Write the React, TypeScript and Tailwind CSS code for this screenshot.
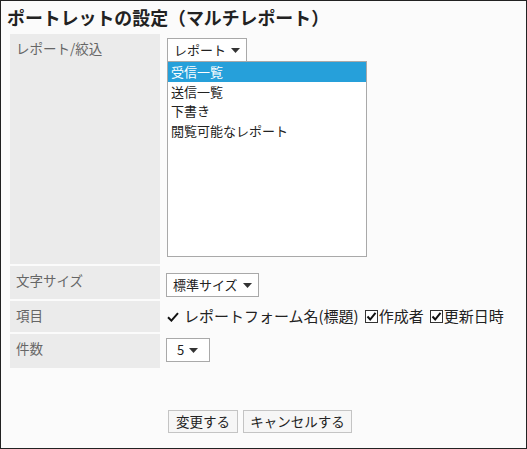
import React from 'react';

const Caret = () => (
    <svg width="9" height="5" viewBox="0 0 9 5" className="ml-[5px] shrink-0">
        <path d="M0 0 H9 L4.5 5 Z" fill="#333" />
    </svg>
);

const CheckBox = () => (
    <span className="inline-flex items-center justify-center w-[13px] h-[13px] border border-[#333] bg-white mr-[1px]">
        <svg width="11" height="11" viewBox="0 0 11 11">
            <path d="M1.5 5.5 L4.2 8.5 L9.5 1.8" fill="none" stroke="#111" strokeWidth="2" />
        </svg>
    </span>
);

const FakeSelect = ({ label, width }: { label: string; width: string }) => (
    <div className={`${width} h-[24px] flex items-center px-[6px] border border-[#a9a9a9] bg-white text-[13px] text-[#222]`}>
        <span>{label}</span>
        <Caret />
    </div>
);

const Label = ({ children }: { children: React.ReactNode }) => (
    <div className="w-[150px] shrink-0 bg-[#ebebeb] pl-[6px] pt-[4px] text-[13.5px] leading-[20px] text-[#666]">
        {children}
    </div>
);

const items = ['受信一覧', '送信一覧', '下書き', '閲覧可能なレポート'];

const App = () => {
    return (
        <div className="w-[527px] h-[449px] border border-[#222] bg-[#fbfbfb] font-['Noto_Sans_CJK_JP',sans-serif] flex flex-col">
            <h1 className="pl-[6px] pt-[5px] h-[33px] text-[17.9px] leading-[22px] font-bold text-[#222]">
                ポートレットの設定（マルチレポート）
            </h1>

            <div className="ml-[9px] flex flex-col gap-[2px]">
                {/* レポート/絞込 */}
                <div className="flex h-[230px]">
                    <Label>レポート/絞込</Label>
                    <div className="pl-[7px] pt-[4px]">
                        <FakeSelect label="レポート" width="w-[80px]" />
                        <div className="w-[200px] h-[196px] -mt-[1px] border border-[#a9a9a9] bg-white text-[13px] leading-[19.5px] text-[#222]">
                            {items.map((it, i) => (
                                <div
                                    key={it}
                                    className={`pl-[3px] ${i === 0 ? 'bg-[#26a0da] text-white' : ''}`}
                                >
                                    {it}
                                </div>
                            ))}
                        </div>
                    </div>
                </div>

                {/* 文字サイズ */}
                <div className="flex h-[33px]">
                    <Label>文字サイズ</Label>
                    <div className="pl-[6px] pt-[7px]">
                        <FakeSelect label="標準サイズ" width="w-[93px]" />
                    </div>
                </div>

                {/* 項目 */}
                <div className="flex h-[31px]">
                    <Label>項目</Label>
                    <div className="pl-[7px] pt-[5px] flex items-center h-[26px] text-[15px] text-[#222] whitespace-nowrap">
                        <svg width="12" height="10" viewBox="0 0 12 10" className="mr-[5px]">
                            <path d="M1 5.2 L4.4 8.6 L11 1.2" fill="none" stroke="#111" strokeWidth="2" />
                        </svg>
                        <span>レポートフォーム名(標題)</span>
                        <span className="ml-[6px] inline-flex items-center">
                            <CheckBox />
                            作成者
                        </span>
                        <span className="ml-[6px] inline-flex items-center">
                            <CheckBox />
                            更新日時
                        </span>
                    </div>
                </div>

                {/* 件数 */}
                <div className="flex h-[34px]">
                    <Label>件数</Label>
                    <div className="pl-[6px] pt-[4px]">
                        <div className="w-[44px] h-[24px] flex items-center px-[10px] border border-[#a9a9a9] bg-white text-[13px] text-[#222]">
                            <span>5</span>
                            <Caret />
                        </div>
                    </div>
                </div>
            </div>

            <div className="flex gap-[5px] pl-[167px] mt-[42px]">
                <button
                    type="button"
                    className="h-[23px] w-[70px] border border-[#c4c4c4] bg-[#f6f6f6] text-[13.5px] text-[#222] leading-none"
                >
                    変更する
                </button>
                <button
                    type="button"
                    className="h-[23px] w-[109px] border border-[#c4c4c4] bg-[#f6f6f6] text-[13.5px] text-[#222] leading-none"
                >
                    キャンセルする
                </button>
            </div>
        </div>
    );
};

export default App;
